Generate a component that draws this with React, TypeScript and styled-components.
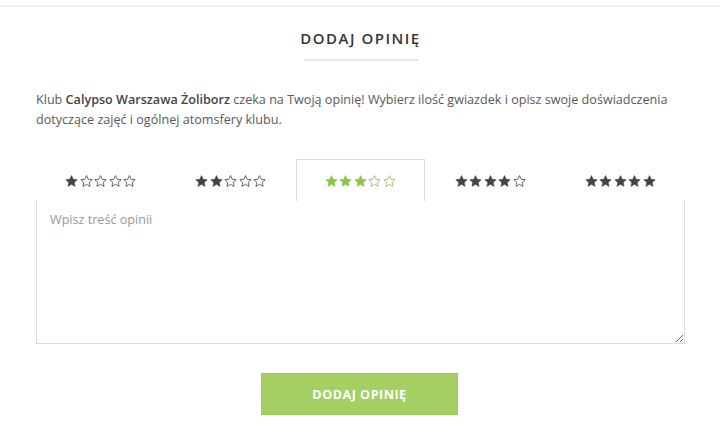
import * as React from 'react';
import styled, { createGlobalStyle } from 'styled-components';

const GlobalStyle = createGlobalStyle`
  html, body {
    margin: 0;
    padding: 0;
    background: #ffffff;
    font-family: 'Open Sans', 'Liberation Sans', sans-serif;
  }
`;

const Page = styled.div`
  width: 720px;
  box-sizing: border-box;
  padding-top: 5px;
`;

const TopRule = styled.div`
  height: 2px;
  background: #efefef;
`;

const Section = styled.section`
  padding: 0 35px 0 36px;
  display: flex;
  flex-direction: column;
`;

const Title = styled.h2`
  margin: 21px 0 0;
  text-align: center;
  font-size: 15px;
  font-weight: 600;
  letter-spacing: 1.5px;
  line-height: 20px;
  color: #363636;
`;

const TitleRule = styled.div`
  align-self: center;
  width: 114px;
  height: 2px;
  margin-top: 11px;
  background: #e6e6e6;
`;

const Intro = styled.p`
  margin: 29px 0 0;
  font-size: 12.6px;
  line-height: 20px;
  color: #595959;

  b {
    font-weight: 600;
    color: #444444;
  }
`;

const Tabs = styled.div`
  display: grid;
  grid-template-columns: repeat(5, 1fr);
  margin-top: 29px;
  position: relative;
  z-index: 1;
`;

const Tab = styled.button<{ $active: boolean }>`
  height: 42px;
  margin: 0;
  padding: 0;
  display: flex;
  align-items: center;
  justify-content: center;
  gap: 1.5px;
  background: #ffffff;
  border: 1px solid ${(p) => (p.$active ? '#dddddd' : 'transparent')};
  border-bottom: none;
  cursor: pointer;
  color: ${(p) => (p.$active ? '#8cc34a' : '#444444')};
`;

const Field = styled.textarea`
  display: block;
  width: 100%;
  height: 144px;
  margin-top: -1px;
  box-sizing: border-box;
  padding: 9px 13px;
  border: 1px solid #dddddd;
  font-family: 'Open Sans', 'Liberation Sans', sans-serif;
  font-size: 12.6px;
  line-height: 20px;
  color: #555555;
  resize: vertical;
  outline: none;

  &::placeholder {
    color: #9a9a9a;
  }
`;

const Submit = styled.button`
  align-self: center;
  width: 197px;
  height: 42px;
  margin: 29px 0 0 -2px;
  background: #a4cf63;
  border: 1px solid #9ccb58;
  color: #ffffff;
  font-family: 'Open Sans', 'Liberation Sans', sans-serif;
  font-size: 12.6px;
  font-weight: 700;
  letter-spacing: 0.5px;
  cursor: pointer;
`;

const STAR = 'M6.5 0.6 L8.2 4.3 L12.2 4.7 L9.2 7.4 L10.05 11.4 L6.5 9.35 L2.95 11.4 L3.8 7.4 L0.8 4.7 L4.8 4.3 Z';

function Star({ filled }: { filled: boolean }) {
  return (
    <svg width="13" height="12" viewBox="0 0 13 12">
      <path
        d={STAR}
        fill={filled ? 'currentColor' : 'none'}
        stroke="currentColor"
        strokeWidth={filled ? 0.6 : 0.8}
        strokeLinejoin="round"
      />
    </svg>
  );
}

export default function App() {
  const [rating, setRating] = React.useState(3);

  return (
    <Page>
      <GlobalStyle />
      <TopRule />
      <Section>
        <Title>DODAJ OPINIĘ</Title>
        <TitleRule />
        <Intro>
          Klub <b>Calypso Warszawa Żoliborz</b> czeka na Twoją opinię! Wybierz ilość gwiazdek i opisz swoje
          doświadczenia dotyczące zajęć i ogólnej atomsfery klubu.
        </Intro>
        <Tabs>
          {[1, 2, 3, 4, 5].map((n) => (
            <Tab key={n} $active={n === rating} onClick={() => setRating(n)}>
              {[1, 2, 3, 4, 5].map((s) => (
                <Star key={s} filled={s <= n} />
              ))}
            </Tab>
          ))}
        </Tabs>
        <Field placeholder="Wpisz treść opinii" />
        <Submit>DODAJ OPINIĘ</Submit>
      </Section>
    </Page>
  );
}
